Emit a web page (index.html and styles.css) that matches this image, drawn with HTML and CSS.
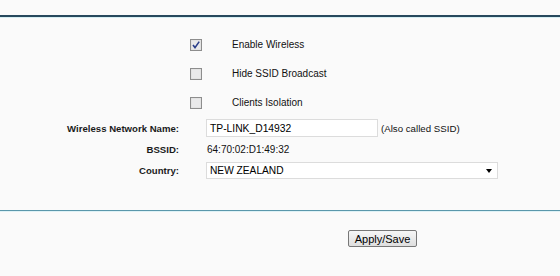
FILE: index.html
```html
<!DOCTYPE html>
<html>
<head>
<meta charset="utf-8">
<link rel="stylesheet" href="styles.css">
</head>
<body>
<div class="page">
  <div class="rule-top"></div>
  <div class="form">
    <div class="check-row">
      <span class="cb">
        <svg width="12" height="12" viewBox="0 0 12 12"><rect x="0.5" y="0.5" width="11" height="11" fill="#dcdcdc" stroke="#8d8d8d"/><rect x="1.5" y="1.5" width="9" height="9" fill="#e9e9ea"/><path d="M3 6 L5 8.6 L9.2 2.6" fill="none" stroke="#2a3f8a" stroke-width="1.6"/></svg>
      </span>
      <span class="check-label">Enable Wireless</span>
    </div>
    <div class="check-row">
      <span class="cb">
        <svg width="12" height="12" viewBox="0 0 12 12"><rect x="0.5" y="0.5" width="11" height="11" fill="#dcdcdc" stroke="#8d8d8d"/><rect x="1.5" y="1.5" width="9" height="9" fill="#e9e9ea"/></svg>
      </span>
      <span class="check-label">Hide SSID Broadcast</span>
    </div>
    <div class="check-row">
      <span class="cb">
        <svg width="12" height="12" viewBox="0 0 12 12"><rect x="0.5" y="0.5" width="11" height="11" fill="#dcdcdc" stroke="#8d8d8d"/><rect x="1.5" y="1.5" width="9" height="9" fill="#e9e9ea"/></svg>
      </span>
      <span class="check-label">Clients Isolation</span>
    </div>
    <div class="field-row row-name">
      <span class="label">Wireless Network Name:</span>
      <span class="text-input">TP-LINK_D14932</span>
      <span class="note">(Also called SSID)</span>
    </div>
    <div class="field-row row-bssid">
      <span class="label">BSSID:</span>
      <span class="value">64:70:02:D1:49:32</span>
    </div>
    <div class="field-row row-country">
      <span class="label">Country:</span>
      <span class="select"><span>NEW ZEALAND</span><span class="arrow"></span></span>
    </div>
  </div>
  <div class="rule-bottom"></div>
  <div class="actions">
    <button class="btn">Apply/Save</button>
  </div>
</div>
</body>
</html>
```
FILE: styles.css
```css
html, body {
  margin: 0;
  padding: 0;
  background: #fafafa;
}
body {
  font-family: "Liberation Sans", Arial, sans-serif;
  font-size: 10px;
  color: #111;
  width: 560px;
  height: 276px;
  overflow: hidden;
}
.page {
  padding-top: 15px;
}
.rule-top {
  height: 2px;
  background: #27495d;
  border-bottom: 1px solid #d6eef2;
}
.form {
  padding-top: 12px;
}
.check-row {
  display: flex;
  align-items: center;
  height: 29px;
  padding-left: 190px;
}
.cb {
  display: flex;
  width: 12px;
  height: 12px;
}
.check-label {
  margin-left: 30px;
}
.field-row {
  display: flex;
  align-items: center;
}
.row-name {
  height: 22px;
}
.row-bssid {
  height: 21px;
}
.row-country {
  height: 21px;
}
.label {
  width: 179px;
  text-align: right;
  font-weight: bold;
  font-size: 9.6px;
  color: #1a1a1a;
}
.text-input {
  margin-left: 27px;
  box-sizing: border-box;
  width: 172px;
  height: 18px;
  background: #fff;
  border: 1px solid #dcdcdc;
  padding-left: 3px;
  display: flex;
  align-items: center;
  font-size: 10.3px;
  color: #000;
}
.note {
  margin-left: 3px;
  font-size: 9.7px;
}
.value {
  margin-left: 28px;
}
.select {
  margin-left: 27px;
  box-sizing: border-box;
  width: 292px;
  height: 17px;
  background: #fff;
  border: 1px solid #dcdcdc;
  padding: 0 5px 0 3px;
  display: flex;
  align-items: center;
  justify-content: space-between;
  font-size: 10.2px;
  color: #000;
}
.arrow {
  width: 0;
  height: 0;
  border-left: 3.5px solid transparent;
  border-right: 3.5px solid transparent;
  border-top: 4px solid #000;
}
.rule-bottom {
  margin-top: 29px;
  height: 1px;
  background: #5a97ab;
  border-bottom: 1px solid #dff2f6;
}
.actions {
  display: flex;
  padding-top: 18px;
  padding-left: 348px;
}
.btn {
  box-sizing: border-box;
  width: 69px;
  height: 17px;
  padding: 0;
  font-family: "Liberation Sans", Arial, sans-serif;
  font-size: 11px;
  color: #000;
  border: 1px solid #777;
  border-radius: 2px;
  background: linear-gradient(#f6f6f6, #dedede);
}
```
